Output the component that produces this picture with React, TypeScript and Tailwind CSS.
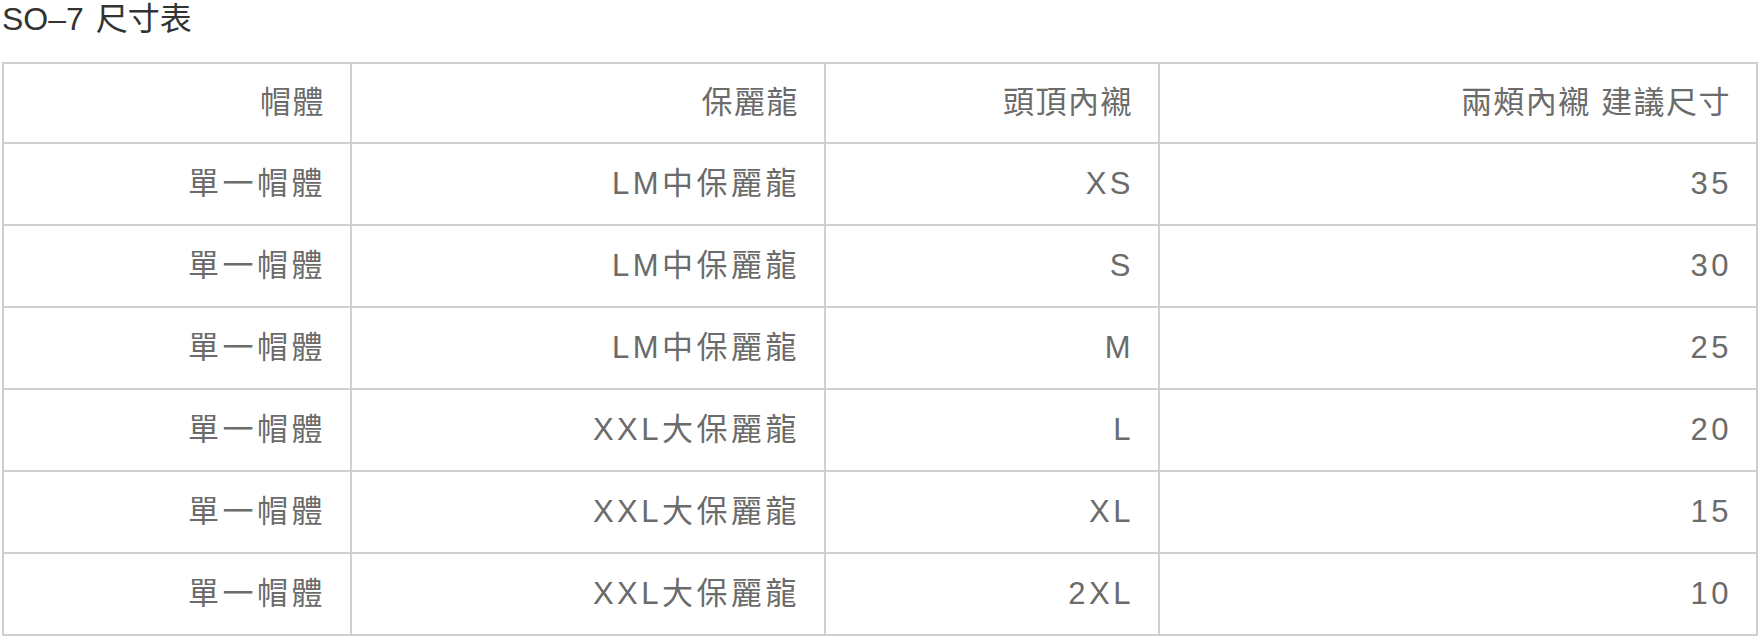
import React from "react";

const rows: [string, string, string, string][] = [
  ["單一帽體", "LM中保麗龍", "XS", "35"],
  ["單一帽體", "LM中保麗龍", "S", "30"],
  ["單一帽體", "LM中保麗龍", "M", "25"],
  ["單一帽體", "XXL大保麗龍", "L", "20"],
  ["單一帽體", "XXL大保麗龍", "XL", "15"],
  ["單一帽體", "XXL大保麗龍", "2XL", "10"],
];

const header = ["帽體", "保麗龍", "頭頂內襯", "兩頰內襯 建議尺寸"];

export default function App() {
  return (
    <div
      className="w-[1762px] h-[640px] bg-white overflow-hidden pl-[2px]"
      style={{ fontFamily: '"Liberation Sans", "Noto Sans CJK TC", sans-serif' }}
    >
      <div className="text-[32px] leading-[38px] text-[#333333] [word-spacing:3px]">SO–7 尺寸表</div>
      <div className="mt-[24px] w-[1756px] border-l-2 border-t-2 border-[#cfcfcf]">
        <div className="grid grid-cols-[348px_474px_334px_598px] h-[80px]">
          {header.map((h, i) => (
            <div
              key={i}
              className="flex items-center justify-end border-r-2 border-b-2 border-[#cfcfcf] pr-[25px] text-[31px] tracking-[1.5px] text-[#6b6b6b] whitespace-nowrap"
            >
              {h}
            </div>
          ))}
        </div>
        {rows.map((r, ri) => (
          <div key={ri} className="grid grid-cols-[348px_474px_334px_598px] h-[82px]">
            {r.map((c, ci) => (
              <div
                key={ci}
                className="flex items-center justify-end border-r-2 border-b-2 border-[#cfcfcf] pr-[24px] text-[31px] tracking-[3.5px] text-[#6b6b6b] whitespace-nowrap"
              >
                {c}
              </div>
            ))}
          </div>
        ))}
      </div>
    </div>
  );
}
